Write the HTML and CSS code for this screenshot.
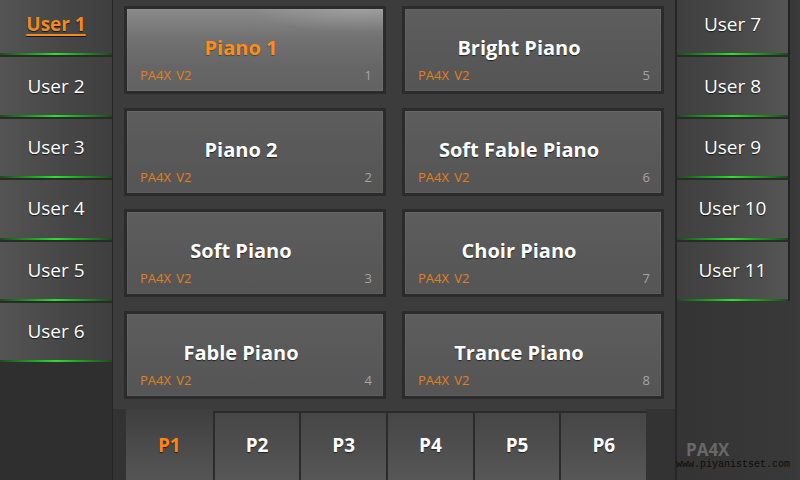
FILE: index.html
```html
<!DOCTYPE html>
<html lang="en">
<head>
<meta charset="utf-8">
<title>PA4X Sounds</title>
<link rel="stylesheet" href="styles.css">
</head>
<body>
<div class="app">
  <aside class="side side-left">
    <div class="user active"><span>User 1</span></div>
    <div class="user"><span>User 2</span></div>
    <div class="user"><span>User 3</span></div>
    <div class="user"><span>User 4</span></div>
    <div class="user"><span>User 5</span></div>
    <div class="user"><span>User 6</span></div>
  </aside>

  <main class="center">
    <section class="panel">
      <div class="tile selected"><div class="face"><div class="name">Piano 1</div><div class="meta"><span class="bank">PA4X V2</span><span class="num">1</span></div></div></div>
      <div class="tile"><div class="face"><div class="name">Piano 2</div><div class="meta"><span class="bank">PA4X V2</span><span class="num">2</span></div></div></div>
      <div class="tile"><div class="face"><div class="name">Soft Piano</div><div class="meta"><span class="bank">PA4X V2</span><span class="num">3</span></div></div></div>
      <div class="tile"><div class="face"><div class="name">Fable Piano</div><div class="meta"><span class="bank">PA4X V2</span><span class="num">4</span></div></div></div>
      <div class="tile"><div class="face"><div class="name">Bright Piano</div><div class="meta"><span class="bank">PA4X V2</span><span class="num">5</span></div></div></div>
      <div class="tile"><div class="face"><div class="name">Soft Fable Piano</div><div class="meta"><span class="bank">PA4X V2</span><span class="num">6</span></div></div></div>
      <div class="tile"><div class="face"><div class="name">Choir Piano</div><div class="meta"><span class="bank">PA4X V2</span><span class="num">7</span></div></div></div>
      <div class="tile"><div class="face"><div class="name">Trance Piano</div><div class="meta"><span class="bank">PA4X V2</span><span class="num">8</span></div></div></div>
    </section>
    <nav class="tabs">
      <div class="tab active">P1</div>
      <div class="tab">P2</div>
      <div class="tab">P3</div>
      <div class="tab">P4</div>
      <div class="tab">P5</div>
      <div class="tab">P6</div>
    </nav>
  </main>

  <aside class="side side-right">
    <div class="user"><span>User 7</span></div>
    <div class="user"><span>User 8</span></div>
    <div class="user"><span>User 9</span></div>
    <div class="user"><span>User 10</span></div>
    <div class="user"><span>User 11</span></div>
    <div class="brand">
      <div class="model">PA4X</div>
      <div class="site">www.piyanistset.com</div>
    </div>
  </aside>
</div>
</body>
</html>
```

FILE: styles.css
```css
* { box-sizing: border-box; }

html, body {
  margin: 0;
  padding: 0;
  width: 800px;
  height: 480px;
  overflow: hidden;
  background: #333333;
  font-family: "Open Sans", "DejaVu Sans", sans-serif;
}

.app {
  display: flex;
  width: 800px;
  height: 480px;
}

/* ---- user buttons (left and right columns) ---- */
.side {
  display: flex;
  flex-direction: column;
  background: #2f2f2f;
  margin-top: -6px;
  height: 486px;
}

.side-left {
  width: 113px;
  border-right: 1px solid #252525;
}

.side-right {
  width: 125px;
  border-left: 2px solid #262626;
  background: linear-gradient(to right, #343434, #383838 90%, #3a3a3a);
}

.user {
  position: relative;
  height: 61.4px;
  flex: none;
  display: flex;
  align-items: center;
  justify-content: center;
  border-top: 2px solid #2a2a2a;
  padding-bottom: 3px;
  color: #ffffff;
  font-size: 19px;
  text-shadow: 0 1px 1px rgba(0, 0, 0, 0.7);
}

.side-left .user {
  background: linear-gradient(to right, #545454, #474747 55%, #3f3f3f);
}

.side-right .user {
  width: 113px;
  border-right: 2px solid #222222;
  background: linear-gradient(to right, #3f3f3f, #474747 45%, #555555);
}

/* green status strip under each button */
.user::after {
  content: "";
  position: absolute;
  left: 0;
  right: 0;
  bottom: 0;
  height: 2px;
  background: linear-gradient(to right, #1f4a1f, #1fb51f 35%, #2ee02e 50%, #1fb51f 65%, #1f4a1f);
}

.user.active {
  color: #f28a1e;
  font-weight: 700;
  text-decoration: underline;
  text-decoration-thickness: 2px;
  text-underline-offset: 3px;
}

/* ---- center: sound tiles ---- */
.center {
  width: 562px;
  display: flex;
  flex-direction: column;
}

.panel {
  height: 409px;
  background: #3c3c3c;
  padding: 6px 11px 0 11px;
  display: grid;
  grid-template-columns: 262px 262px;
  grid-template-rows: repeat(4, 88px);
  grid-auto-flow: column;
  column-gap: 16px;
  row-gap: 13.5px;
}

.tile {
  border: 3px solid #2b2b2b;
  background: #2b2b2b;
}

.face {
  height: 100%;
  background: linear-gradient(to bottom, #5d5d5d, #585858 60%, #555555);
  box-shadow: inset 0 0 0 1px rgba(255, 255, 255, 0.05);
  padding: 0 11px 8px 13px;
  display: flex;
  flex-direction: column;
}

.tile.selected .face {
  background:
    radial-gradient(ellipse 60% 40% at 90% 0%, rgba(255, 255, 255, 0.18), transparent 70%),
    linear-gradient(to bottom, #8a8a8a, #727272 35%, #666666 70%, #626262);
}

.name {
  margin-top: 27px;
  height: 24px;
  line-height: 24px;
  text-align: center;
  padding-right: 30px;
  color: #ffffff;
  font-size: 20px;
  font-weight: 700;
  white-space: nowrap;
  text-shadow: 0 1px 1px rgba(0, 0, 0, 0.6);
}

.tile.selected .name {
  color: #ff8c1a;
  text-shadow: 0 1px 1px rgba(0, 0, 0, 0.35);
}

.meta {
  margin-top: auto;
  display: flex;
  justify-content: space-between;
  align-items: center;
  line-height: 15px;
}

.bank {
  color: #e57e1c;
  font-size: 13px;
  word-spacing: 2px;
}

.num {
  color: #a4a4a4;
  font-size: 13px;
}

/* ---- page tabs ---- */
.tabs {
  display: flex;
  margin-left: 13px;
  width: 520px;
  height: 71px;
  background: linear-gradient(to bottom, #3c3c3c 2px, #2a2a2a 2px, #2a2a2a 4px, transparent 4px);
}

.tab {
  width: 86.7px;
  flex: none;
  display: flex;
  align-items: center;
  justify-content: center;
  padding-bottom: 4px;
  margin-top: 4px;
  border-left: 2px solid #2b2b2b;
  background: linear-gradient(to bottom, #464646, #4e4e4e 50%, #575757);
  color: #ffffff;
  font-size: 19px;
  font-weight: 700;
  text-shadow: 0 1px 1px rgba(0, 0, 0, 0.6);
}

.tab.active {
  margin-top: 0;
  padding-bottom: 0;
  border-left: none;
  background: linear-gradient(to bottom, #3e3e3e, #494949 45%, #555555);
  color: #ff8417;
}

/* ---- brand corner ---- */
.brand {
  margin-top: auto;
  padding: 0 0 9px 0;
  margin-left: -1px;
}

.model {
  padding-left: 10px;
  color: #686868;
  font-size: 17px;
  font-weight: 700;
  line-height: 18px;
}

.site {
  color: #0c0c0c;
  font-family: "Liberation Mono", "DejaVu Sans Mono", monospace;
  font-size: 10px;
  line-height: 12px;
}
```
